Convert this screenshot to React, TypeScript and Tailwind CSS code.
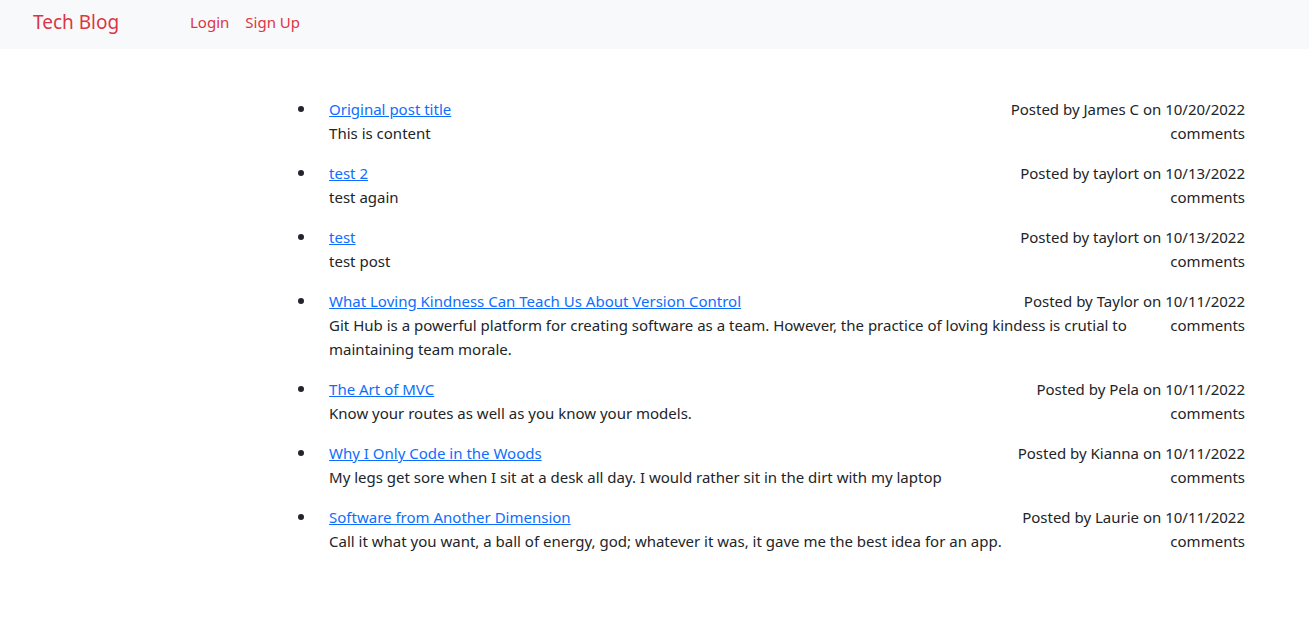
type Post = {
  title: string;
  body: string;
  author: string;
  date: string;
};

const posts: Post[] = [
  { title: "Original post title", body: "This is content", author: "James C", date: "10/20/2022" },
  { title: "test 2", body: "test again", author: "taylort", date: "10/13/2022" },
  { title: "test", body: "test post", author: "taylort", date: "10/13/2022" },
  {
    title: "What Loving Kindness Can Teach Us About Version Control",
    body: "Git Hub is a powerful platform for creating software as a team. However, the practice of loving kindess is crutial to maintaining team morale.",
    author: "Taylor",
    date: "10/11/2022",
  },
  { title: "The Art of MVC", body: "Know your routes as well as you know your models.", author: "Pela", date: "10/11/2022" },
  {
    title: "Why I Only Code in the Woods",
    body: "My legs get sore when I sit at a desk all day. I would rather sit in the dirt with my laptop",
    author: "Kianna",
    date: "10/11/2022",
  },
  {
    title: "Software from Another Dimension",
    body: "Call it what you want, a ball of energy, god; whatever it was, it gave me the best idea for an app.",
    author: "Laurie",
    date: "10/11/2022",
  },
];

function PostItem({ post }: { post: Post }) {
  return (
    <li className="pl-3 marker:text-[17px]">
      <article>
        <div className="flex justify-between gap-10">
          <a href="#post" className="text-[#0d6efd] underline">
            {post.title}
          </a>
          <p className="shrink-0">
            Posted by {post.author} on {post.date}
          </p>
        </div>
        <div className="flex justify-between gap-10">
          <p>{post.body}</p>
          <p className="shrink-0">comments</p>
        </div>
      </article>
    </li>
  );
}

export default function App() {
  return (
    <div className="bg-white font-['Noto_Sans',sans-serif] text-[15px] leading-6 text-[#212529]">
      <header className="bg-[#f8f9fa]">
        <nav className="flex items-center pt-2.5 pb-[15px] pl-[33px] text-[#dc3545]">
          <a href="#home" className="w-[157px] text-[19px] leading-6">
            Tech Blog
          </a>
          <div className="flex gap-4">
            <a href="#login">Login</a>
            <a href="#signup">Sign Up</a>
          </div>
        </nav>
      </header>
      <main className="pt-12 pr-16 pb-4 pl-[23%]">
        <ul className="flex list-disc flex-col gap-4 pl-4">
          {posts.map((post) => (
            <PostItem key={post.title} post={post} />
          ))}
        </ul>
      </main>
    </div>
  );
}
